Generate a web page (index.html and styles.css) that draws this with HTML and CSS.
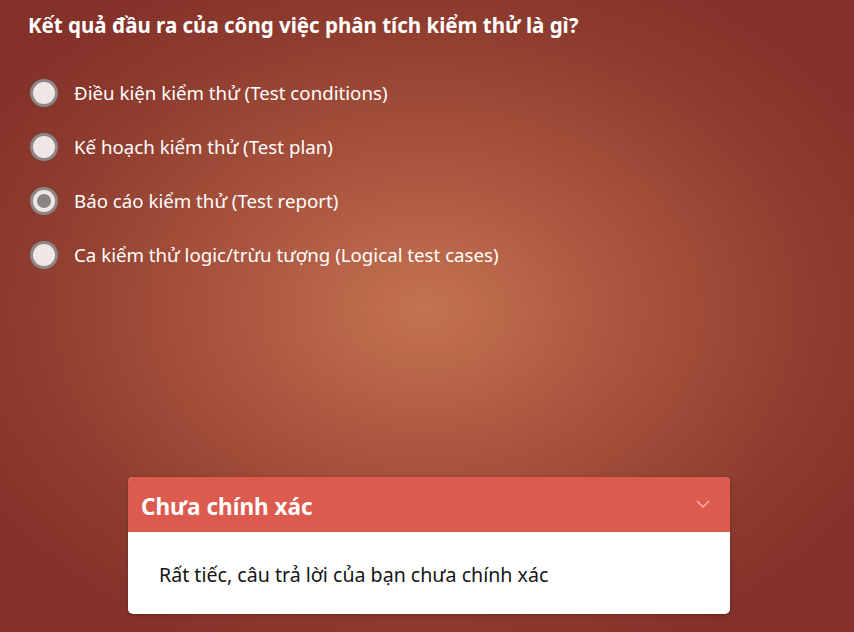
FILE: index.html
```html
<!DOCTYPE html>
<html lang="vi">
<head>
<meta charset="utf-8">
<link rel="stylesheet" href="styles.css">
</head>
<body>
<div class="page">
  <h1 class="question">Kết quả đầu ra của công việc phân tích kiểm thử là gì?</h1>
  <ul class="options">
    <li class="option"><span class="radio"></span><span class="label">Điều kiện kiểm thử (Test conditions)</span></li>
    <li class="option"><span class="radio"></span><span class="label">Kế hoạch kiểm thử (Test plan)</span></li>
    <li class="option"><span class="radio checked"></span><span class="label">Báo cáo kiểm thử (Test report)</span></li>
    <li class="option"><span class="radio"></span><span class="label">Ca kiểm thử logic/trừu tượng (Logical test cases)</span></li>
  </ul>
  <div class="spacer"></div>
  <div class="card">
    <div class="card-head">
      <span class="card-title">Chưa chính xác</span>
      <svg class="chev" width="14" height="8" viewBox="0 0 14 8"><path d="M1 1 L7 7 L13 1" fill="none" stroke="#f3b9b2" stroke-width="1.3"/></svg>
    </div>
    <div class="card-body">Rất tiếc, câu trả lời của bạn chưa chính xác</div>
  </div>
</div>
</body>
</html>
```
FILE: styles.css
```css
html, body {
  margin: 0;
  padding: 0;
  width: 854px;
  height: 632px;
  overflow: hidden;
}
body {
  font-family: "Noto Sans", "Open Sans", sans-serif;
  background: radial-gradient(ellipse 520px 380px at 425px 310px, #c47351 0%, #a9543e 40%, #8f3d2f 75%, #84312a 100%);
  color: #fff;
}
.page {
  height: 632px;
  display: flex;
  flex-direction: column;
  padding: 0 0 0 28px;
  box-sizing: border-box;
}
.question {
  margin: 11px 0 0 0;
  font-size: 20.5px;
  font-weight: 700;
  line-height: 28px;
}
.options {
  list-style: none;
  margin: 40px 0 0 0;
  padding: 0;
  display: flex;
  flex-direction: column;
  gap: 26px;
}
.option {
  display: flex;
  align-items: center;
  height: 28px;
}
.radio {
  width: 22px;
  height: 22px;
  border: 3px solid #8d8786;
  border-radius: 50%;
  background: #efe6e6;
  margin-left: 2px;
  margin-right: 16px;
  position: relative;
  flex: none;
}
.radio.checked::after {
  content: "";
  position: absolute;
  left: 4px;
  top: 4px;
  width: 14px;
  height: 14px;
  border-radius: 50%;
  background: #8a8484;
}
.label {
  font-size: 18.7px;
  margin-top: -2px;
}
.spacer { flex: 1; }
.card {
  margin: 0 0 18px 100px;
  width: 602px;
  border-radius: 5px;
  overflow: hidden;
  background: #fff;
  box-shadow: 0 1px 4px rgba(0,0,0,0.25);
}
.card-head {
  background: #dc5b4e;
  height: 55px;
  display: flex;
  align-items: center;
  justify-content: space-between;
  padding: 0 20px 0 13px;
}
.card-title {
  font-size: 22.5px;
  font-weight: 700;
  color: #fff;
  padding-top: 3px;
}
.chev { margin-top: -2px; }
.card-body {
  height: 82px;
  display: flex;
  align-items: center;
  padding-left: 31px;
  color: #151515;
  font-size: 19.6px;
  padding-top: 2px;
  box-sizing: border-box;
}
```
